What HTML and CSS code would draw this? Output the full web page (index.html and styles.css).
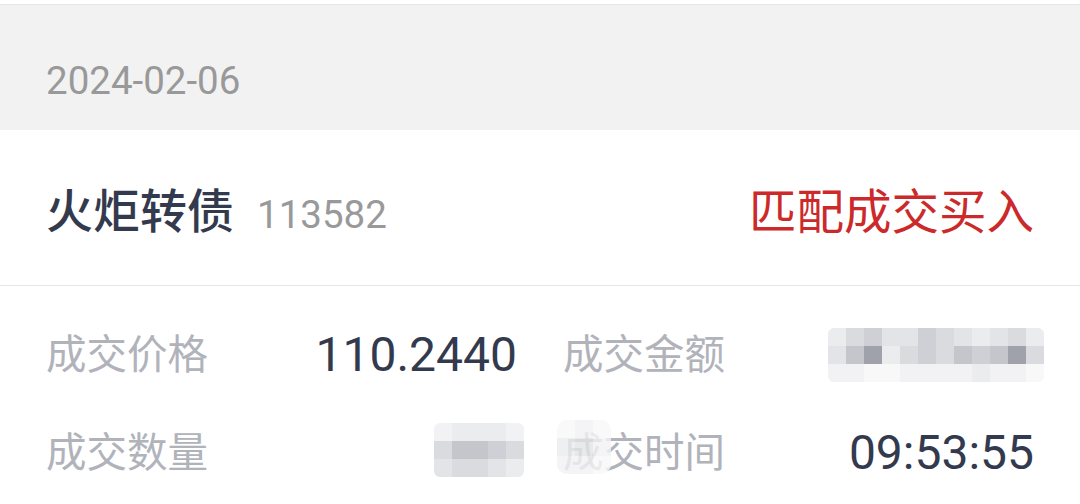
FILE: index.html
```html
<!DOCTYPE html>
<html lang="zh-CN">
<head>
    <meta charset="UTF-8">
    <meta name="viewport" content="width=device-width, initial-scale=1.0">
    <title>成交明细</title>
    <link rel="stylesheet" href="styles.css">
</head>
<body>

    <div class="date-bar">
        <span class="date">2024-02-06</span>
    </div>

    <div class="trade">
        <div class="trade-head">
            <div class="stock">
                <span class="stock-name">火炬转债</span>
                <span class="stock-code">113582</span>
            </div>
            <span class="trade-type">匹配成交买入</span>
        </div>

        <div class="info">
            <div class="cell">
                <span class="label">成交价格</span>
                <span class="value">110.2440</span>
            </div>
            <div class="cell">
                <span class="label">成交金额</span>
                <!-- amount is masked in the screenshot -->
                <div class="mosaic mosaic-amount">
                    <span class="g2"></span><span class="g4"></span><span class="g5"></span><span class="g3"></span><span class="g3"></span><span class="g5"></span><span class="g4"></span><span class="g3"></span><span class="g2"></span><span class="g3"></span><span class="g4"></span><span class="g2"></span>
                    <span class="g3"></span><span class="g6"></span><span class="g8"></span><span class="g2"></span><span class="g4"></span><span class="g5"></span><span class="g4"></span><span class="g6"></span><span class="g5"></span><span class="g6"></span><span class="g8"></span><span class="g4"></span>
                    <span class="g1"></span><span class="g1"></span><span class="g0"></span><span class="g0"></span><span class="g1"></span><span class="g1"></span><span class="g1"></span><span class="g1"></span><span class="g2"></span><span class="g1"></span><span class="g1"></span><span class="g0"></span>
                </div>
            </div>
            <div class="cell">
                <span class="label">成交数量</span>
                <div class="mosaic mosaic-qty">
                    <span class="g1"></span><span class="g2"></span><span class="g2"></span><span class="g2"></span><span class="g1"></span>
                    <span class="g4"></span><span class="g6"></span><span class="g6"></span><span class="g5"></span><span class="g4"></span>
                    <span class="g3"></span><span class="g4"></span><span class="g4"></span><span class="g3"></span><span class="g2"></span>
                </div>
            </div>
            <div class="cell">
                <span class="label label-masked">成交时间
                    <span class="mosaic mosaic-patch">
                        <span class="g0"></span><span class="g1"></span><span class="g0"></span>
                        <span class="g2"></span><span class="g3"></span><span class="g1"></span>
                        <span class="g1"></span><span class="g1"></span><span class="g0"></span>
                    </span>
                </span>
                <span class="value">09:53:55</span>
            </div>
        </div>
    </div>

</body>
</html>
```

FILE: styles.css
```css
* {
    box-sizing: border-box;
    margin: 0;
    padding: 0;
}

body {
    font-family: Roboto, "Noto Sans CJK SC", sans-serif;
    background-color: #fff;
    color: #333a4e;
    padding-top: 4px;
}

.date-bar {
    background-color: #f2f2f2;
    border-top: 1px solid #e6e6e6;
    height: 126px;
    padding: 57px 46px 0;
}

.date {
    font-size: 38.5px;
    line-height: 38px;
    color: #999;
}

.trade-head {
    display: flex;
    justify-content: space-between;
    align-items: center;
    height: 156px;
    padding: 0 46px;
    border-bottom: 1px solid #e6e6e6;
}

.stock {
    display: flex;
    align-items: baseline;
}

.stock-name {
    font-size: 47px;
    font-weight: 500;
    color: #333a4e;
}

.stock-code {
    font-size: 38.5px;
    color: #999;
    margin-left: 23px;
}

.trade-type {
    font-size: 47.5px;
    color: #cc2a2a;
    padding-top: 2px;
}

.info {
    display: grid;
    grid-template-columns: 1fr 1fr;
    column-gap: 46px;
    padding: 20px 46px 0;
}

.cell {
    display: flex;
    justify-content: space-between;
    align-items: center;
    height: 98px;
}

.label {
    font-size: 40.5px;
    line-height: 48px;
    color: #b1b3bb;
}

.value {
    font-size: 48px;
    line-height: 56px;
    color: #333a4e;
}

/* pixelated blocks covering hidden values */
.mosaic {
    display: grid;
    grid-auto-rows: 18px;
    border-radius: 6px;
    overflow: hidden;
}

.mosaic-amount {
    grid-template-columns: repeat(12, 18px);
    margin-right: -10px;
}

.mosaic-qty {
    grid-template-columns: repeat(5, 18px);
    margin-right: -7px;
    margin-top: -6px;
}

.label-masked {
    position: relative;
}

.mosaic-patch {
    position: absolute;
    left: -6px;
    top: -9px;
    grid-template-columns: repeat(3, 18px);
    border-radius: 10px;
    opacity: 0.8;
}

.g0 { background-color: #f8f8f9; }
.g1 { background-color: #f2f2f4; }
.g2 { background-color: #ebecee; }
.g3 { background-color: #e3e4e7; }
.g4 { background-color: #dadbdf; }
.g5 { background-color: #cfd0d5; }
.g6 { background-color: #c4c6cc; }
.g7 { background-color: #b3b5bd; }
.g8 { background-color: #9fa1ab; }
```
